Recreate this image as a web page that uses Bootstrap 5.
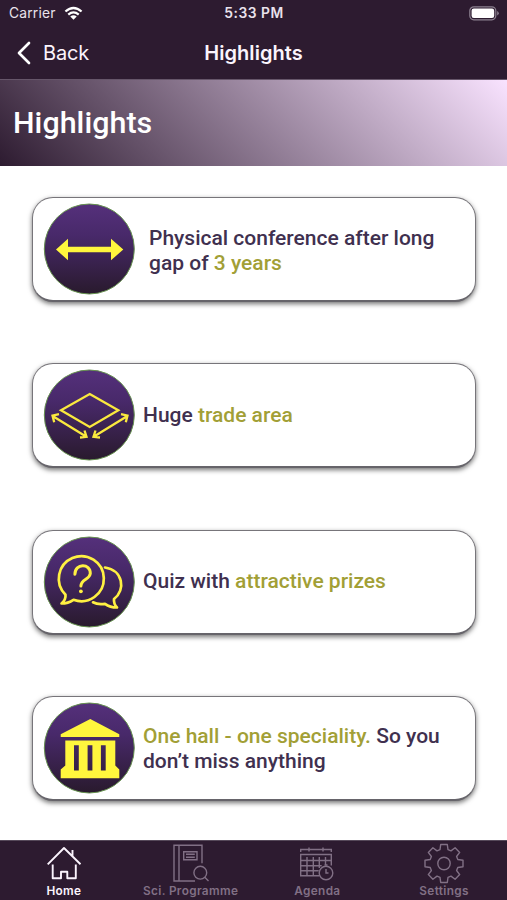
<!DOCTYPE html>
<html lang="en">
<head>
<meta charset="utf-8">
<meta name="viewport" content="width=device-width, initial-scale=1">
<title>Highlights</title>
<link href="https://cdn.jsdelivr.net/npm/bootstrap@5.3.0/dist/css/bootstrap.min.css" rel="stylesheet">
<style>
body{font-family:Inter,"Liberation Sans",sans-serif;width:507px;height:900px;overflow:hidden}
.dark-bar{background:#2d1b30}
.status{height:27px;font-size:13px;line-height:27px;padding:0 8px 0 9px;color:#e9e2ec}
.side{flex:1 1 0}
.carrier{font-size:13.8px;letter-spacing:.2px}
.clock{font-weight:600;font-size:13.8px;letter-spacing:.55px}
.nav-row{height:52px;color:#fbf4fd;padding:0 16px}
.back{font-size:20px;gap:12px;letter-spacing:-.2px}
.nav-title{font-size:20px;font-weight:600;letter-spacing:.05px}
.banner{height:87px;padding:0 13px;background:linear-gradient(45deg,#2d1b30 0%,#f9e3ff 100%);border-top:1px solid #66566a}
.banner h1{font-size:30.4px;font-weight:500;letter-spacing:.05px;color:#fff;font-family:Roboto,sans-serif}
.list{padding:31px 31px 0 32px;gap:61.3px}
.item{height:105px;border:1.3px solid #77757a;border-bottom:2px solid #66646a;border-radius:21px;padding:0 10px;box-shadow:0 2px 5px rgba(0,0,0,.55);background:#fff}
.item p{font:500 21px/25px Roboto,sans-serif;color:#40304f;margin-left:8px;white-space:nowrap}
.item p.wide{margin-left:14px}
.item p.two-line{padding-top:3px}
.item em{font-style:normal;color:#a29f36}
.item svg{flex:none}
.tabs{height:60px;border-top:1px solid #56495a}
.tab{flex:1 1 0;color:#817085;font-size:11.8px;font-weight:600;line-height:14px;letter-spacing:.35px;padding:2px 0 0 1px}
.tab.on{color:#fbf4fd}
.tab svg{fill:none;stroke:currentColor;stroke-width:1.4}
.tab.on svg{stroke-width:1.9}
</style>
<script src="https://cdn.jsdelivr.net/npm/bootstrap@5.3.0/dist/js/bootstrap.bundle.min.js"></script>
</head>
<body class="d-flex flex-column bg-white">
<header class="dark-bar">
  <div class="status d-flex align-items-center">
    <div class="side d-flex align-items-center"><span class="carrier me-1">Carrier</span>
      <svg class="ms-1" width="19" height="15" viewBox="0 0 20 15" fill="none" stroke="#fff" stroke-width="2.4"><path d="M1.500 5.400Q10-2 18.500 5.400M4.500 8.600Q10 4 15.500 8.600"/><path d="M10 14 6.600 10.600Q10 8 13.400 10.600Z" fill="#fff" stroke="none"/></svg>
    </div>
    <span class="clock">5:33 PM</span>
    <div class="side d-flex justify-content-end">
      <svg width="30" height="15" viewBox="0 0 30 15"><rect x=".8" y=".8" width="26" height="13" rx="4" fill="none" stroke="#8c8190" stroke-width="1.2"/><rect x="2.600" y="2.600" width="22.600" height="9.400" rx="2.200" fill="#fff"/><path d="M28.200 5q1.600.8 1.600 2.300t-1.600 2.300z" fill="#8c8190"/></svg>
    </div>
  </div>
  <div class="nav-row d-flex align-items-center">
    <div class="side back d-flex align-items-center"><svg width="15" height="24" viewBox="0 0 15 24" fill="none" stroke="#fff" stroke-width="2.700" stroke-linecap="round" stroke-linejoin="round"><path d="M13 2 3 12l10 10"/></svg><span>Back</span></div>
    <span class="nav-title">Highlights</span>
    <div class="side"></div>
  </div>
</header>
<div class="banner d-flex align-items-center"><h1 class="mb-0">Highlights</h1></div>
<svg width="0" height="0" class="position-absolute"><defs>
  <linearGradient id="disc" x2="0" y2="1"><stop stop-color="#55307b"/><stop offset=".35" stop-color="#48296a"/><stop offset="1" stop-color="#291a2d"/></linearGradient>
</defs></svg>
<main class="list d-flex flex-column flex-grow-1">
  <section class="item d-flex align-items-center">
    <svg width="92" height="92" viewBox="0 0 92 92"><circle cx="46.300" cy="46" r="45" fill="url(#disc)" stroke="#66914f"/><path fill="#fff63d" d="M13 46.500 25 35.700v8h43v-8l12.300 10.800L68 57.300v-8H25v8z"/></svg>
    <p class="mb-0 wide two-line">Physical conference after long<br>gap of <em>3 years</em></p>
  </section>
  <section class="item d-flex align-items-center">
    <svg width="92" height="92" viewBox="0 0 92 92"><circle cx="46.300" cy="46" r="45" fill="url(#disc)" stroke="#66914f"/><g fill="none" stroke="#fae93e" stroke-width="2.300"><path d="M46.700 25 75.300 41.300 46.700 58 18 41.300Z"/><path d="M10 47.200 43 67.500M51 67.500 84 47.200M16 45.200 9.500 46.600 11.200 53.300M41.500 61.500 43.500 67.800 37 68.500M78 45.200 84.500 46.600 82.800 53.300M52.500 61.500 50.500 67.800 57 68.500"/></g></svg>
    <p class="mb-0">Huge <em>trade area</em></p>
  </section>
  <section class="item d-flex align-items-center">
    <svg width="92" height="92" viewBox="0 0 92 92"><circle cx="46.300" cy="46" r="45" fill="url(#disc)" stroke="#66914f"/><g fill="none" stroke="#fff042" stroke-width="2.700" stroke-linecap="round" stroke-linejoin="round"><path d="M22.500 58.700A22.500 22.500 0 1 1 30.500 63.800Q25 67.500 18.500 67.500 23 64 22.500 58.700ZM62 31.500C80 34 83 54 71 63Q70.500 68 74 71.500 67 71.500 62 67.800 55 69 50 66.300"/><path stroke-width="3" d="M31.900 38.300C32 27 47.500 27 47.300 37.500 47 43.500 37.900 43 37.900 50"/></g><circle cx="37.900" cy="55.300" r="1.900" fill="#fff042"/></svg>
    <p class="mb-0">Quiz with <em>attractive prizes</em></p>
  </section>
  <section class="item d-flex align-items-center">
    <svg width="92" height="92" viewBox="0 0 92 92"><circle cx="46.300" cy="46" r="45" fill="url(#disc)" stroke="#66914f"/><path fill="#fff63d" fill-rule="evenodd" d="M47.300 17 76.300 32.300V35H17.700v-2.700zM22.300 38.600h50v25l4 4v8.700H17.700v-8.700l4.600-4zM31 43.300v25.300h4.800V43.300zm13.600 0v25.300h4.800V43.300zm13.300 0v25.300h4.800V43.300z"/></svg>
    <p class="mb-0 two-line"><em>One hall - one speciality.</em> So you<br>don’t miss anything</p>
  </section>
</main>
<footer class="tabs dark-bar d-flex">
  <div class="tab on d-flex flex-column align-items-center"><svg width="44" height="41" viewBox="0 0 44 41" stroke-linejoin="round"><path d="M5.700 21.300 22 5l16.500 16.300M30.500 13V7M10.700 21.500v13.800H19v-6.600h6.300v6.600h8.500V21.500"/></svg>Home</div>
  <div class="tab d-flex flex-column align-items-center"><svg width="44" height="41" viewBox="0 0 44 41"><path d="M26 38H5V2.300h28v18M10 2.300V38M14.700 8.700H28v8H14.700zM17 11.200h8.800M17 14.200h8.800M35.800 34.300l3.700 3.600"/><circle cx="31.300" cy="29.700" r="6.400"/></svg>Sci. Programme</div>
  <div class="tab d-flex flex-column align-items-center"><svg width="44" height="41" viewBox="0 0 44 41"><path d="M5.700 9V6.500h30.600V9M14 4.500v4M28 4.500v4M24 32.700H5.700V11.500h30.600v11M5.700 17.500h30.600M5.700 22.700h21M5.700 27.700h18M12 14v18.700M18.300 14v18.700M24.300 14v11M30.500 14v8M31 26v4h2.500M29.500 22h3"/><circle cx="31" cy="30" r="6.800"/></svg>Agenda</div>
  <div class="tab d-flex flex-column align-items-center"><svg width="44" height="41" viewBox="-22 -20.500 44 41"><path stroke-linejoin="round" d="M-3.300-19H3.300L4-13.800 7-12.600 11.100-15.700 15.700-11.100 12.600-7 13.800-4 19-3.300V3.300L13.800 4 12.600 7 15.700 11.100 11.100 15.700 7 12.600 4 13.800 3.300 19H-3.300L-4 13.800-7 12.600-11.100 15.700-15.700 11.100-12.600 7-13.800 4-19 3.300V-3.300L-13.800-4-12.600-7-15.700-11.100-11.100-15.700-7-12.600-4-13.800Z"/><circle r="6.200"/></svg>Settings</div>
</footer>
</body>
</html>
